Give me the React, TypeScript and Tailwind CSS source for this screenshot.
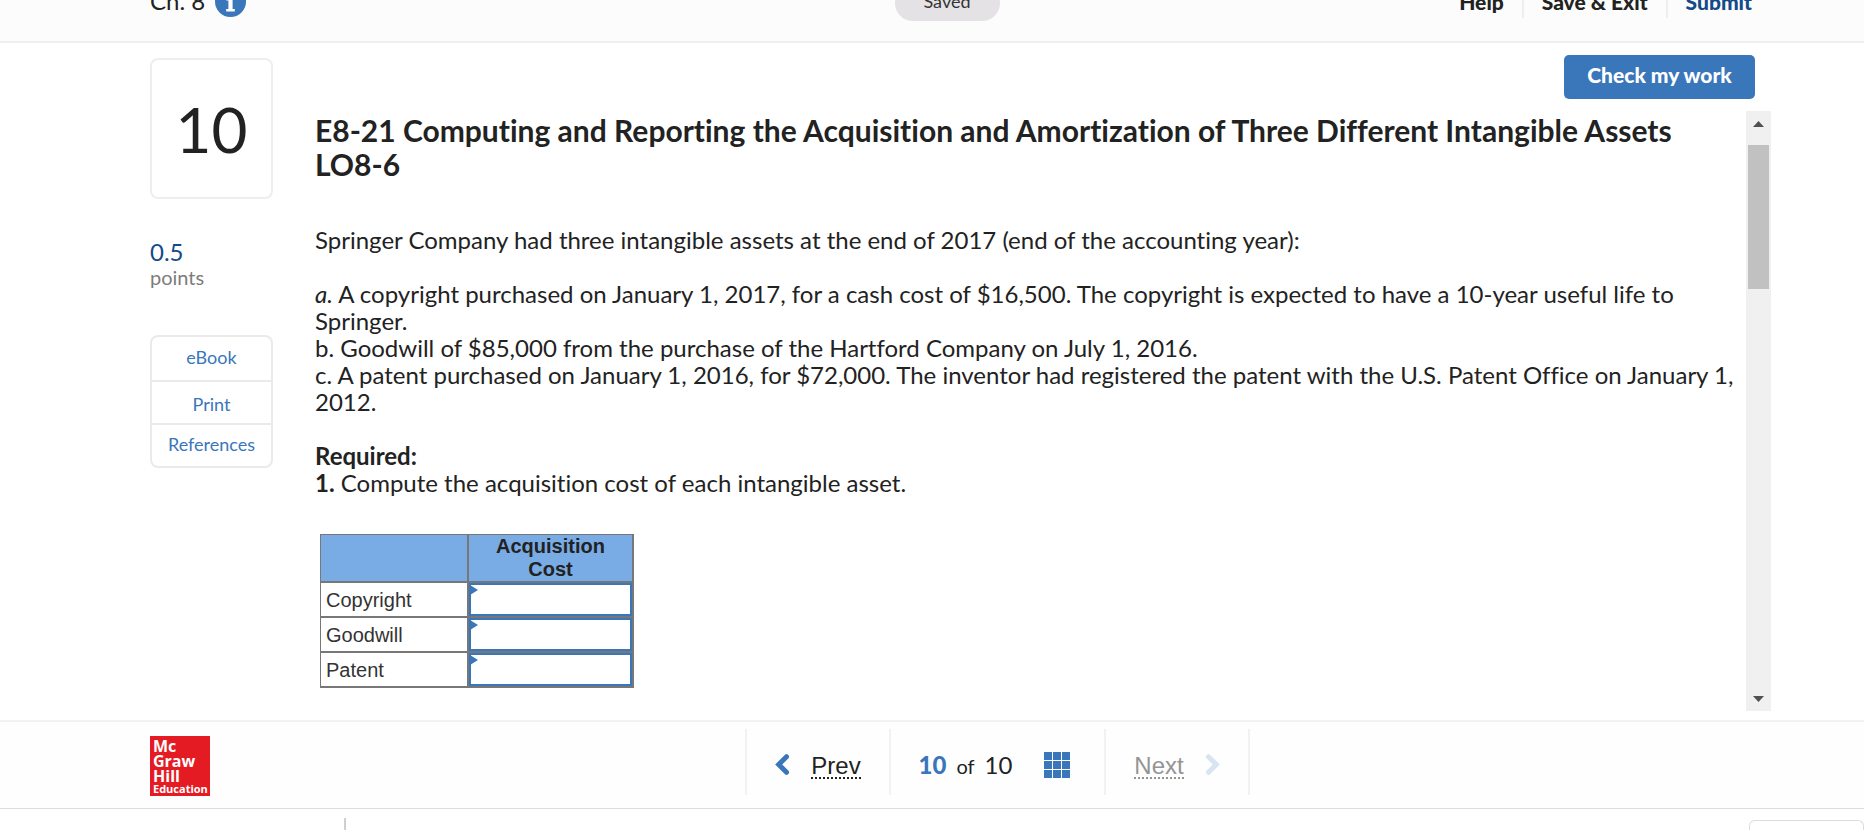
import { useState } from 'react'

// ─── Data ─────────────────────────────────────────────────────

const RESOURCES = [
  { label: 'eBook', className: 'h-[43px] pb-1' },
  { label: 'Print', className: 'h-[43px] pt-0.5 border-t-2' },
  { label: 'References', className: 'h-[43px] pb-1 border-t-2' },
]

const ASSETS = ['Copyright', 'Goodwill', 'Patent']

// ─── Header ───────────────────────────────────────────────────

function Header() {
  return (
    <header className="h-[43px] shrink-0 overflow-hidden border-b-2 border-[#eeeeee] bg-[#fcfcfc] pl-[150px] pr-[112px]">
      <div className="grid h-full grid-cols-3 grid-rows-1 items-end">
        <div className="flex items-center gap-2.5 pb-6">
          <span className="text-2xl leading-8">Ch. 8</span>
          <button
            type="button"
            aria-label="Chapter information"
            className="flex size-[31px] items-center justify-center rounded-full bg-[#3a76ba] text-white"
          >
            <svg viewBox="0 0 31 31" className="size-full" fill="currentColor">
              <circle cx="15.5" cy="7.5" r="2.6" />
              <path d="M11.2 12h6.4v11h2.2v2.6h-8.6V23h2.2v-8.4h-2.2z" />
            </svg>
          </button>
        </div>
        <div className="flex justify-center pr-2 pb-5">
          <span className="w-[105px] rounded-[18px] bg-[#e4e2e5] pt-1 pb-2 text-center text-lg leading-6 text-[#333333]">
            Saved
          </span>
        </div>
        <nav className="flex items-center justify-end pb-[23px] text-[21px] leading-8 font-black">
          <button type="button" className="border-r-2 border-[#eeeeee] pr-[18px]">Help</button>
          <button type="button" className="border-r-2 border-[#eeeeee] px-[18px]">Save &amp; Exit</button>
          <button type="button" className="pl-[18px] text-[#124a8a]">Submit</button>
        </nav>
      </div>
    </header>
  )
}

// ─── Sidebar ──────────────────────────────────────────────────

function Sidebar() {
  return (
    <aside className="w-[123px] shrink-0 pt-[15px]">
      <div className="flex h-[141px] items-center justify-center rounded-lg border-2 border-[#eeeeee] text-[62px] leading-none">
        10
      </div>
      <div className="pt-10">
        <div className="text-2xl leading-[26px] text-[#124a8a]">0.5</div>
        <div className="text-xl leading-6 text-[#7c7c7c]">points</div>
      </div>
      <div className="mt-[46px] overflow-hidden rounded-lg border-2 border-[#eaeaea]">
        {RESOURCES.map(({ label, className }) => (
          <a
            key={label}
            href="#"
            className={`flex items-center justify-center border-[#eaeaea] text-lg leading-6 text-[#3a76ba] ${className}`}
          >
            {label}
          </a>
        ))}
      </div>
    </aside>
  )
}

// ─── Question ─────────────────────────────────────────────────

function AnswerTable() {
  const [answers, setAnswers] = useState<Record<string, string>>({})

  return (
    <table className="ml-[5px] border-separate border-spacing-0 border-t border-l border-[#777777] font-['Liberation_Sans',Arial,sans-serif] text-xl">
      <thead>
        <tr>
          <td className="h-12 w-[148px] border-r-2 border-b-2 border-[#777777] bg-[#79ace5]" />
          <th
            scope="col"
            className="w-[165px] border-r-2 border-b-2 border-[#777777] bg-[#79ace5] px-5 text-center leading-[23px] font-bold"
          >
            Acquisition Cost
          </th>
        </tr>
      </thead>
      <tbody>
        {ASSETS.map((asset) => (
          <tr key={asset}>
            <th
              scope="row"
              className="h-[35px] border-r-2 border-b-2 border-[#777777] px-[5px] text-left leading-6 font-normal text-[#333333]"
            >
              {asset}
            </th>
            <td className="relative border-r-2 border-b-2 border-[#777777] p-0">
              <input
                type="text"
                aria-label={`${asset} acquisition cost`}
                value={answers[asset] ?? ''}
                onChange={(e) => setAnswers({ ...answers, [asset]: e.target.value })}
                className="block h-[33px] w-full border-2 border-[#3a76ba] bg-white px-2 text-right outline-none"
              />
              <svg viewBox="0 0 8 10" className="absolute top-[2px] left-px h-[10px] w-[8px] fill-[#3a76ba]">
                <path d="M0 0l8 5-8 5z" />
              </svg>
            </td>
          </tr>
        ))}
      </tbody>
    </table>
  )
}

function ScrollBar() {
  return (
    <div className="flex w-[25px] shrink-0 flex-col items-center bg-[#f0f0f0]">
      <button type="button" aria-label="Scroll up" className="flex h-[34px] w-full items-center justify-center pb-2">
        <svg viewBox="0 0 11 6" className="h-[6px] w-[11px] fill-[#505050]">
          <path d="M0 6L5.5 0 11 6z" />
        </svg>
      </button>
      <div className="h-36 w-[21px] bg-[#c1c1c1]" />
      <button type="button" aria-label="Scroll down" className="mt-auto flex h-[25px] w-full items-center justify-center">
        <svg viewBox="0 0 11 6" className="h-[6px] w-[11px] fill-[#505050]">
          <path d="M0 0h11L5.5 6z" />
        </svg>
      </button>
    </div>
  )
}

function Question() {
  return (
    <main className="flex min-w-0 flex-1 flex-col pt-3">
      <div className="flex justify-end pr-4">
        <button
          type="button"
          className="h-11 w-[191px] rounded-[5px] bg-[#3a76ba] pb-1 text-[21px] leading-8 font-black text-white"
        >
          Check my work
        </button>
      </div>
      <div className="mt-3 mb-[9px] flex min-h-0 flex-1">
        <div className="min-w-0 flex-1 overflow-hidden pt-0.5 pr-1 text-2xl leading-[27px]">
          <h1 className="pr-5 text-3xl leading-[34px] font-bold">
            E8-21 Computing and Reporting the Acquisition and Amortization of Three Different Intangible Assets LO8-6
          </h1>
          <p className="mt-[45px]">
            Springer Company had three intangible assets at the end of 2017 (end of the accounting year):
          </p>
          <p className="mt-[27px]">
            <em>a.</em> A copyright purchased on January 1, 2017, for a cash cost of $16,500. The copyright is expected
            to have a 10-year useful life to Springer.
          </p>
          <p>b. Goodwill of $85,000 from the purchase of the Hartford Company on July 1, 2016.</p>
          <p>
            c. A patent purchased on January 1, 2016, for $72,000. The inventor had registered the patent with the U.S.
            Patent Office on January 1, 2012.
          </p>
          <p className="mt-[27px] font-bold">Required:</p>
          <p className="mb-[38px]">
            <b>1.</b> Compute the acquisition cost of each intangible asset.
          </p>
          <AnswerTable />
        </div>
        <ScrollBar />
      </div>
    </main>
  )
}

// ─── Footer ───────────────────────────────────────────────────

function Logo() {
  return (
    <div className="size-[60px] shrink-0 bg-[#e51b24] pt-[3px] pl-[3px] font-['Open_Sans',sans-serif] font-bold text-white">
      <div className="text-base leading-[15px]">Mc</div>
      <div className="text-base leading-[15px]">Graw</div>
      <div className="text-base leading-[15px]">Hill</div>
      <div className="text-[11px] leading-[10px]">Education</div>
    </div>
  )
}

function Footer() {
  return (
    <footer className="flex h-[89px] shrink-0 border-t-2 border-b border-t-[#f2f2f2] border-b-[#dcdce0] bg-[#fefefe] pr-[109px] pl-[150px]">
      <div className="pt-3.5">
        <Logo />
      </div>
      <nav className="ml-[30px] flex flex-1 justify-center pt-[7px]">
        <div className="flex h-[66px] border-l-2 border-[#f2f2f2]">
          <button
            type="button"
            className="flex w-36 items-center justify-center gap-[22px] border-r-2 border-[#f2f2f2] pt-2 font-['Liberation_Sans',Arial,sans-serif] text-2xl leading-[23px]"
          >
            <svg viewBox="0 0 14 21" className="mb-1 h-[21px] w-[14px] fill-none stroke-[#3a76ba] stroke-[5]">
              <path d="M11.500 2.700L3.700 10.500l7.800 7.800" strokeLinecap="round" />
            </svg>
            <span className="border-b-2 border-dotted border-[#222222]">Prev</span>
          </button>
          <div className="flex w-[215px] items-center justify-center border-r-2 border-[#f2f2f2] pt-1.5 pr-1.5 text-2xl leading-7">
            <span className="font-black text-[#3a76ba]">10</span>
            <span className="mx-2.5 pt-0.5 text-xl">of</span>
            <span>10</span>
            <button type="button" aria-label="Question list" className="ml-8">
              <svg viewBox="0 0 26 26" className="size-[26px] fill-[#3a76ba]">
                {[0, 9, 18].map((y) => [0, 9, 18].map((x) => <rect key={`${x}-${y}`} x={x} y={y} width="8" height="8" />))}
              </svg>
            </button>
          </div>
          <button
            type="button"
            disabled
            className="flex w-36 items-center justify-center gap-[22px] border-r-2 border-[#f2f2f2] pt-2 font-['Liberation_Sans',Arial,sans-serif] text-2xl leading-[23px] text-[#949494]"
          >
            <span className="border-b-2 border-dotted border-[#949494]">Next</span>
            <svg viewBox="0 0 14 21" className="mb-1 h-[21px] w-[14px] fill-none stroke-[#d8e4f1] stroke-[5]">
              <path d="M2.500 2.700l7.800 7.800-7.800 7.800" strokeLinecap="round" />
            </svg>
          </button>
        </div>
      </nav>
    </footer>
  )
}

// ─── Page ─────────────────────────────────────────────────────

export default function App() {
  return (
    <div className="flex h-screen flex-col overflow-hidden bg-white font-[Lato,sans-serif] text-[#222222] [font-variant-ligatures:none]">
      <Header />
      <div className="flex min-h-0 flex-1 gap-[42px] pr-[93px] pl-[150px]">
        <Sidebar />
        <Question />
      </div>
      <Footer />
      <div className="flex h-[21px] shrink-0 items-end justify-between overflow-hidden pl-[344px]">
        <div className="h-3 w-0.5 bg-[#cfcfcf]" />
        <div className="h-2.5 w-[115px] rounded-t-md border border-b-0 border-[#dcdce0]" />
      </div>
    </div>
  )
}
